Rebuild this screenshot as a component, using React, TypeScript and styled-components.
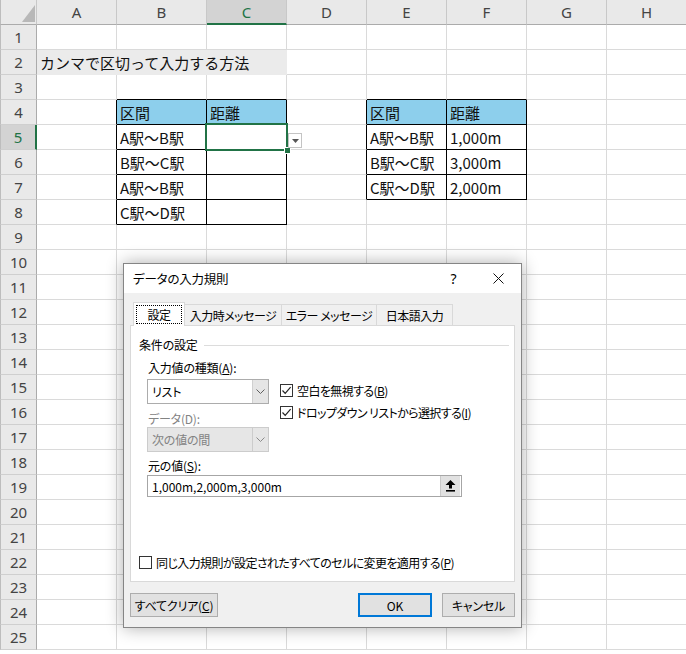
import React from "react";
import styled, { createGlobalStyle } from "styled-components";

const GlobalStyle = createGlobalStyle`
  html, body {
    margin: 0;
    padding: 0;
    background: #fff;
  }
  body {
    font-family: "Noto Sans CJK JP", "Noto Sans", sans-serif;
    overflow: hidden;
  }
`;

const GRID = "#dadada";
const GREEN = "#217346";
const BLUE_FILL = "#8dcfec";
const TITLE_FILL = "#ebebeb";

const columns = [
  { key: "A", width: 80 },
  { key: "B", width: 90 },
  { key: "C", width: 80 },
  { key: "D", width: 80 },
  { key: "E", width: 80 },
  { key: "F", width: 80 },
  { key: "G", width: 80 },
  { key: "H", width: 80 },
];

const ROW_COUNT = 25;
const ACTIVE_COL = 2; // C
const ACTIVE_ROW = 5;

type CellData = { text?: string; fill?: string; span?: number };

const cells: Record<string, CellData> = {
  A2: { text: "カンマで区切って入力する方法", fill: TITLE_FILL, span: 3 },
  B4: { text: "区間", fill: BLUE_FILL },
  C4: { text: "距離", fill: BLUE_FILL },
  B5: { text: "A駅～B駅" },
  B6: { text: "B駅～C駅" },
  B7: { text: "A駅～B駅" },
  B8: { text: "C駅～D駅" },
  E4: { text: "区間", fill: BLUE_FILL },
  F4: { text: "距離", fill: BLUE_FILL },
  E5: { text: "A駅～B駅" },
  F5: { text: "1,000m" },
  E6: { text: "B駅～C駅" },
  F6: { text: "3,000m" },
  E7: { text: "C駅～D駅" },
  F7: { text: "2,000m" },
};

// ranges with thin black borders (0-based column index)
const boxes = [
  { c1: 1, c2: 2, r1: 4, r2: 8 },
  { c1: 4, c2: 5, r1: 4, r2: 7 },
];

const inBox = (c: number, r: number) =>
  boxes.some((b) => c >= b.c1 && c <= b.c2 && r >= b.r1 && r <= b.r2);

/* ---------- sheet ---------- */

const Sheet = styled.div`
  position: relative;
  display: grid;
  grid-template-columns: 37px ${columns.map((c) => `${c.width}px`).join(" ")};
  grid-auto-rows: 25px;
  width: 686px;
  height: 654px;
  overflow: hidden;
`;

const Corner = styled.div`
  box-sizing: border-box;
  background: #e9e9e9;
  border-left: 1px solid #bdbdbd;
  border-right: 1px solid #c8c8c8;
  border-bottom: 1px solid #ababab;
  display: flex;
  align-items: flex-end;
  justify-content: flex-end;
  padding: 0 1px 2px 0;
`;

const ColHeader = styled.div<{ $active?: boolean }>`
  box-sizing: border-box;
  display: flex;
  align-items: center;
  justify-content: center;
  background: ${(p) => (p.$active ? "#d3d3d3" : "#e9e9e9")};
  color: ${(p) => (p.$active ? GREEN : "#444")};
  border-right: 1px solid #c8c8c8;
  border-bottom: ${(p) => (p.$active ? `2px solid ${GREEN}` : "1px solid #ababab")};
  font-family: "Noto Sans", sans-serif;
  font-size: 15px;
`;

const RowHeader = styled.div<{ $active?: boolean }>`
  box-sizing: border-box;
  display: flex;
  align-items: center;
  justify-content: center;
  background: ${(p) => (p.$active ? "#d3d3d3" : "#e9e9e9")};
  color: ${(p) => (p.$active ? GREEN : "#444")};
  border-left: 1px solid #bdbdbd;
  border-right: ${(p) => (p.$active ? `2px solid ${GREEN}` : "1px solid #ababab")};
  border-bottom: 1px solid #cfcfcf;
  font-family: "Noto Sans", sans-serif;
  font-size: 15px;
`;

const Cell = styled.div<{
  $fill?: string;
  $right: string;
  $bottom: string;
  $span?: number;
  $active?: boolean;
}>`
  grid-column: span ${(p) => p.$span ?? 1};
  position: relative;
  z-index: ${(p) => (p.$active ? 2 : "auto")};
  box-sizing: border-box;
  display: flex;
  align-items: center;
  padding-left: 3px;
  background: ${(p) => p.$fill ?? "#fff"};
  border-right: 1px solid ${(p) => p.$right};
  border-bottom: 1px solid ${(p) => p.$bottom};
  font-size: 15px;
  color: #111;
  white-space: nowrap;
`;

const ActiveFrame = styled.div`
  position: absolute;
  left: -2px;
  top: -2px;
  right: -2px;
  bottom: -2px;
  border: 2px solid ${GREEN};
  pointer-events: none;
`;

const FillHandle = styled.div`
  position: absolute;
  right: -5px;
  bottom: -5px;
  width: 5px;
  height: 5px;
  background: ${GREEN};
  border: 1px solid #fff;
`;

const ListButton = styled.div`
  position: absolute;
  left: calc(100% + 2px);
  top: 8px;
  width: 14px;
  height: 15px;
  box-sizing: border-box;
  background: #fff;
  border: 1px solid #c4c4c4;
  display: flex;
  align-items: center;
  justify-content: center;
`;

/* ---------- dialog ---------- */

const Dialog = styled.div`
  position: absolute;
  z-index: 5;
  left: 123px;
  top: 263px;
  width: 399px;
  height: 365px;
  box-sizing: border-box;
  display: flex;
  flex-direction: column;
  background: #f0f0f0;
  border: 1px solid #858585;
  box-shadow: 0 0 16px rgba(0, 0, 0, 0.32);
  font-family: "Noto Sans CJK JP", sans-serif;
  font-size: 12px;
  font-feature-settings: "palt";
  letter-spacing: -0.2px;
  color: #000;
  white-space: nowrap;
`;

const TitleBar = styled.div`
  height: 29px;
  display: flex;
  align-items: center;
  background: #fff;
  padding-left: 9px;
`;

const TitleText = styled.div`
  flex: 1;
  font-size: 12.5px;
`;

const TitleButton = styled.div`
  width: 45px;
  height: 29px;
  display: flex;
  align-items: center;
  justify-content: center;
  font-family: "Noto Sans", sans-serif;
  font-size: 14px;
`;

const Body = styled.div`
  flex: 1;
  display: flex;
  flex-direction: column;
  padding: 9px 6px 0 6px;
`;

const TabStrip = styled.div`
  display: flex;
  align-items: flex-end;
  height: 23px;
  padding-left: 4px;
`;

const Tab = styled.div<{ $selected?: boolean; $width: number }>`
  position: relative;
  z-index: ${(p) => (p.$selected ? 2 : 0)};
  width: ${(p) => p.$width}px;
  height: ${(p) => (p.$selected ? 24 : 21)}px;
  margin-bottom: ${(p) => (p.$selected ? -1 : 0)}px;
  margin-left: -1px;
  box-sizing: border-box;
  display: flex;
  align-items: center;
  justify-content: center;
  background: ${(p) => (p.$selected ? "#fff" : "#f0f0f0")};
  border: 1px solid #d9d9d9;
  border-bottom: none;
  padding: 2px 0;
  letter-spacing: -0.5px;
  overflow: hidden;
`;

const FocusRect = styled.div`
  flex: 1;
  align-self: stretch;
  margin: 0 2px;
  display: flex;
  align-items: center;
  justify-content: center;
  border: 1px dotted #000;
`;

const Panel = styled.div`
  position: relative;
  z-index: 1;
  height: 257px;
  box-sizing: border-box;
  display: flex;
  flex-direction: column;
  background: #fff;
  border: 1px solid #d9d9d9;
`;

const GroupHeader = styled.div`
  display: flex;
  align-items: center;
  height: 18px;
  margin: 9px 5px 0 8px;
`;

const GroupLine = styled.div`
  flex: 1;
  height: 1px;
  margin: 3px 0 0 6px;
  background: #dcdcdc;
`;

const Fields = styled.div`
  padding-left: 16px;
  display: flex;
  flex-direction: column;
`;

const UpperBlock = styled.div`
  display: flex;
  margin-top: 5px;
`;

const LeftCol = styled.div`
  width: 122px;
  display: flex;
  flex-direction: column;
`;

const RightCol = styled.div`
  margin-left: 11px;
  padding-top: 21px;
  display: flex;
  flex-direction: column;
  letter-spacing: -0.6px;
`;

const Label = styled.div<{ $disabled?: boolean; $gap?: number }>`
  height: 18px;
  margin-top: ${(p) => p.$gap ?? 0}px;
  padding-left: 1px;
  display: flex;
  align-items: center;
  color: ${(p) => (p.$disabled ? "#838383" : "#000")};
`;

const Select = styled.div<{ $disabled?: boolean; $gap?: number }>`
  height: 25px;
  margin-top: ${(p) => p.$gap ?? 0}px;
  box-sizing: border-box;
  display: flex;
  background: ${(p) => (p.$disabled ? "#e6e6e6" : "#fff")};
  border: 1px solid ${(p) => (p.$disabled ? "#cccccc" : "#acacac")};
  color: ${(p) => (p.$disabled ? "#838383" : "#000")};
`;

const SelectValue = styled.div`
  flex: 1;
  display: flex;
  align-items: center;
  padding-left: 4px;
`;

const SelectArrow = styled.div<{ $disabled?: boolean }>`
  width: 15px;
  display: flex;
  align-items: center;
  justify-content: center;
  background: ${(p) => (p.$disabled ? "#e6e6e6" : "#e5e5e5")};
  border-left: 1px solid ${(p) => (p.$disabled ? "#cccccc" : "#d0d0d0")};
`;

const CheckRow = styled.div`
  height: 22px;
  display: flex;
  align-items: center;
  gap: 4px;
`;

const BottomCheck = styled(CheckRow)`
  height: 18px;
  margin: auto 0 10px 8px;
  letter-spacing: -0.6px;
`;

const Box = styled.span`
  width: 13px;
  height: 13px;
  box-sizing: border-box;
  border: 1px solid #333;
  background: #fff;
  display: inline-flex;
  align-items: center;
  justify-content: center;
  flex-shrink: 0;
`;

const RefInput = styled.div`
  width: 315px;
  height: 22px;
  margin-top: 1px;
  box-sizing: border-box;
  display: flex;
  border: 1px solid #a6a6a6;
  background: #fff;
`;

const RefValue = styled.div`
  flex: 1;
  display: flex;
  align-items: center;
  padding-left: 4px;
  letter-spacing: 0;
`;

const RefButton = styled.div`
  width: 19px;
  margin: 0 1px 0 0;
  display: flex;
  align-items: center;
  justify-content: center;
  background: #e1e1e1;
  border-left: 1px solid #c9c9c9;
`;

const Footer = styled.div`
  display: flex;
  padding: 11px 0 0 0;
`;

const Button = styled.div<{ $width: number; $default?: boolean; $push?: boolean; $gap?: number }>`
  width: ${(p) => p.$width}px;
  height: 24px;
  box-sizing: border-box;
  margin-left: ${(p) => (p.$push ? "auto" : `${p.$gap ?? 0}px`)};
  display: flex;
  align-items: center;
  justify-content: center;
  background: #e1e1e1;
  border: ${(p) => (p.$default ? "2px solid #0078d7" : "1px solid #adadad")};
`;

/* ---------- small drawings ---------- */

const CornerTriangle = () => (
  <svg width="13" height="17" viewBox="0 0 13 17">
    <polygon points="13,0 13,17 0,17" fill="#b8b8b8" />
  </svg>
);

const DownTriangle = () => (
  <svg width="7" height="4" viewBox="0 0 7 4">
    <polygon points="0,0 7,0 3.5,4" fill="#555" />
  </svg>
);

const Chevron = ({ color }: { color: string }) => (
  <svg width="9" height="5" viewBox="0 0 9 5">
    <polyline points="0.5,0.5 4.5,4.5 8.5,0.5" fill="none" stroke={color} strokeWidth="1" />
  </svg>
);

const Check = () => (
  <svg width="11" height="11" viewBox="0 0 11 11">
    <polyline points="1.5,5.5 4.2,8.3 9.6,2.2" fill="none" stroke="#222" strokeWidth="1.2" />
  </svg>
);

const CloseIcon = () => (
  <svg width="11" height="11" viewBox="0 0 11 11">
    <path d="M0.5 0.5 L10.5 10.5 M10.5 0.5 L0.5 10.5" stroke="#111" strokeWidth="1" />
  </svg>
);

const CollapseIcon = () => (
  <svg width="11" height="12" viewBox="0 0 11 12">
    <polygon points="5.5,0 10.5,5 7,5 7,8.5 4,8.5 4,5 0.5,5" fill="#000" />
    <rect x="1" y="10" width="9" height="1.6" fill="#000" />
  </svg>
);

function CheckBox({ checked, children }: { checked?: boolean; children: React.ReactNode }) {
  return (
    <>
      <Box>{checked && <Check />}</Box>
      <span>{children}</span>
    </>
  );
}

function ValidationDialog() {
  return (
    <Dialog>
      <TitleBar>
        <TitleText>データの入力規則</TitleText>
        <TitleButton>?</TitleButton>
        <TitleButton>
          <CloseIcon />
        </TitleButton>
      </TitleBar>
      <Body>
        <TabStrip>
          <Tab $selected $width={52}>
            <FocusRect>設定</FocusRect>
          </Tab>
          <Tab $width={98}>入力時メッセージ</Tab>
          <Tab $width={96}>エラー メッセージ</Tab>
          <Tab $width={77}>日本語入力</Tab>
        </TabStrip>
        <Panel>
          <GroupHeader>
            条件の設定
            <GroupLine />
          </GroupHeader>
          <Fields>
            <UpperBlock>
              <LeftCol>
                <Label>
                  入力値の種類(<u>A</u>):
                </Label>
                <Select $gap={3}>
                  <SelectValue>リスト</SelectValue>
                  <SelectArrow>
                    <Chevron color="#606060" />
                  </SelectArrow>
                </Select>
                <Label $disabled $gap={5}>
                  データ(D):
                </Label>
                <Select $disabled>
                  <SelectValue>次の値の間</SelectValue>
                  <SelectArrow $disabled>
                    <Chevron color="#8a8a8a" />
                  </SelectArrow>
                </Select>
              </LeftCol>
              <RightCol>
                <CheckRow>
                  <CheckBox checked>
                    空白を無視する(<u>B</u>)
                  </CheckBox>
                </CheckRow>
                <CheckRow>
                  <CheckBox checked>
                    ドロップダウン リストから選択する(<u>I</u>)
                  </CheckBox>
                </CheckRow>
              </RightCol>
            </UpperBlock>
            <Label $gap={4}>
              元の値(<u>S</u>):
            </Label>
            <RefInput>
              <RefValue>1,000m,2,000m,3,000m</RefValue>
              <RefButton>
                <CollapseIcon />
              </RefButton>
            </RefInput>
          </Fields>
          <BottomCheck>
            <CheckBox>
              同じ入力規則が設定されたすべてのセルに変更を適用する(<u>P</u>)
            </CheckBox>
          </BottomCheck>
        </Panel>
        <Footer>
          <Button $width={88}>
            すべてクリア(<u>C</u>)
          </Button>
          <Button $width={74} $default $push>
            OK
          </Button>
          <Button $width={73} $gap={10}>
            キャンセル
          </Button>
        </Footer>
      </Body>
    </Dialog>
  );
}

export default function App() {
  const rows = Array.from({ length: ROW_COUNT }, (_, i) => i + 1);

  return (
    <>
      <GlobalStyle />
      <Sheet>
        <Corner>
          <CornerTriangle />
        </Corner>
        {columns.map((c, ci) => (
          <ColHeader key={c.key} $active={ci === ACTIVE_COL}>
            {c.key}
          </ColHeader>
        ))}
        {rows.map((r) => {
          const out: React.ReactNode[] = [
            <RowHeader key={`h${r}`} $active={r === ACTIVE_ROW}>
              {r}
            </RowHeader>,
          ];
          let ci = 0;
          while (ci < columns.length) {
            const id = `${columns[ci].key}${r}`;
            const data = cells[id] ?? {};
            const span = data.span ?? 1;
            const last = ci + span - 1;
            const plain = data.fill ?? GRID;
            const right = inBox(last, r) || inBox(last + 1, r) ? "#000" : plain;
            const bottom = inBox(ci, r) || inBox(ci, r + 1) ? "#000" : plain;
            const active = ci === ACTIVE_COL && r === ACTIVE_ROW;
            out.push(
              <Cell
                key={id}
                $fill={data.fill}
                $right={right}
                $bottom={bottom}
                $span={span}
                $active={active}
              >
                {data.text}
                {active && (
                  <>
                    <ActiveFrame>
                      <FillHandle />
                    </ActiveFrame>
                    <ListButton>
                      <DownTriangle />
                    </ListButton>
                  </>
                )}
              </Cell>
            );
            ci += span;
          }
          return out;
        })}
        <ValidationDialog />
      </Sheet>
    </>
  );
}
